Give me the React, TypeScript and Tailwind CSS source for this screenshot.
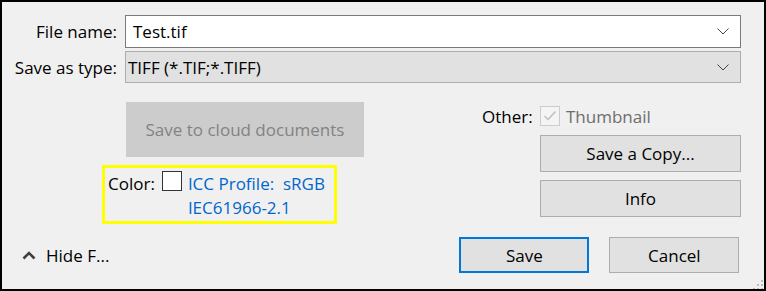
const Chevron = () => (
  <svg width="12" height="7" viewBox="0 0 12 7" className="shrink-0">
    <polyline points="0.5,0.5 6,6 11.5,0.5" fill="none" stroke="#444" strokeWidth="1" />
  </svg>
);

const Button = ({ label, className = "" }: { label: string; className?: string }) => (
  <div className={`flex items-center justify-center bg-[#e1e1e1] text-black ${className}`}>{label}</div>
);

export default function App() {
  return (
    <div
      className="relative h-[291px] w-[766px] overflow-hidden border-2 border-black bg-[#f0f0f0] text-[17px] leading-none text-black"
      style={{ fontFamily: '"Open Sans", "Noto Sans", sans-serif' }}
    >
      <div className="grid grid-cols-[115px_1fr] gap-x-[8px] gap-y-[3px] pt-[13px] pr-[23px]">
        <div className="flex h-[33px] items-center justify-end">File name:</div>
        <div className="flex h-[33px] items-center justify-between border border-[#7a7a7a] bg-white pl-[7px] pr-[11px]">
          <span>Test.tif</span>
          <Chevron />
        </div>
        <div className="flex h-[32px] items-center justify-end">Save as type:</div>
        <div className="flex h-[32px] items-center justify-between border border-[#adadad] bg-[#e1e1e1] pl-[2px] pr-[11px]">
          <span>TIFF (*.TIF;*.TIFF)</span>
          <Chevron />
        </div>
      </div>

      <div className="flex h-[141px]">
        <div className="flex w-[460px] flex-col">
          <div className="mt-[19px] ml-[124px] flex h-[55px] w-[238px] items-center justify-center bg-[#cccccc] text-[#838383]">
            Save to cloud documents
          </div>
          <div className="mt-[8px] ml-[100px] flex h-[59px] w-[235px] border-[3px] border-[#ffff00] pt-[3px] pl-[3px]">
            <span className="mt-[4px]">Color:</span>
            <div className="ml-[7px] h-[20px] w-[20px] shrink-0 border border-[#333] bg-white" />
            <div className="ml-[6px] flex flex-col gap-[7px] pt-[4px] text-[#0066cc]">
              <span>ICC Profile:&nbsp; sRGB</span>
              <span>IEC61966-2.1</span>
            </div>
          </div>
        </div>

        <div className="ml-[20px] flex w-[259px] flex-col">
          <div className="mt-[23px] flex h-[20px] items-center">
            <span className="w-[49px] text-right">Other:</span>
            <div className="ml-[9px] flex h-[20px] w-[20px] items-center justify-center border border-[#cccccc] bg-[#f4f4f4]">
              <svg width="14" height="12" viewBox="0 0 14 12">
                <polyline points="1.5,6 5,9.5 12.5,1.5" fill="none" stroke="#bcbcbc" strokeWidth="1.4" />
              </svg>
            </div>
            <span className="ml-[6px] text-[#6d6d6d]">Thumbnail</span>
          </div>
          <Button label="Save a Copy..." className="mt-[9px] ml-[58px] h-[37px] w-[201px] border border-[#adadad]" />
          <Button label="Info" className="mt-[8px] ml-[58px] h-[37px] w-[201px] border border-[#adadad]" />
        </div>
      </div>

      <div className="mt-[13px] flex items-center">
        <div className="ml-[20px] flex items-center">
          <svg width="14" height="9" viewBox="0 0 14 9">
            <polyline points="1.5,7.5 7,2 12.5,7.5" fill="none" stroke="#404040" strokeWidth="2.6" />
          </svg>
          <span className="ml-[10px]">Hide F...</span>
        </div>
        <div className="ml-[350px] flex gap-[20px]">
          <Button label="Save" className="h-[36px] w-[130px] border-2 border-[#0078d7]" />
          <Button label="Cancel" className="h-[36px] w-[130px] border border-[#adadad]" />
        </div>
      </div>

      <svg width="12" height="12" viewBox="0 0 12 12" className="absolute right-0 bottom-0">
        <rect x="9" y="3" width="2" height="2" fill="#bcbcbc" />
        <rect x="5" y="7" width="2" height="2" fill="#bcbcbc" />
        <rect x="9" y="7" width="2" height="2" fill="#bcbcbc" />
        <rect x="1" y="11" width="2" height="1" fill="#bcbcbc" />
        <rect x="5" y="11" width="2" height="1" fill="#bcbcbc" />
        <rect x="9" y="11" width="2" height="1" fill="#bcbcbc" />
      </svg>
    </div>
  );
}
